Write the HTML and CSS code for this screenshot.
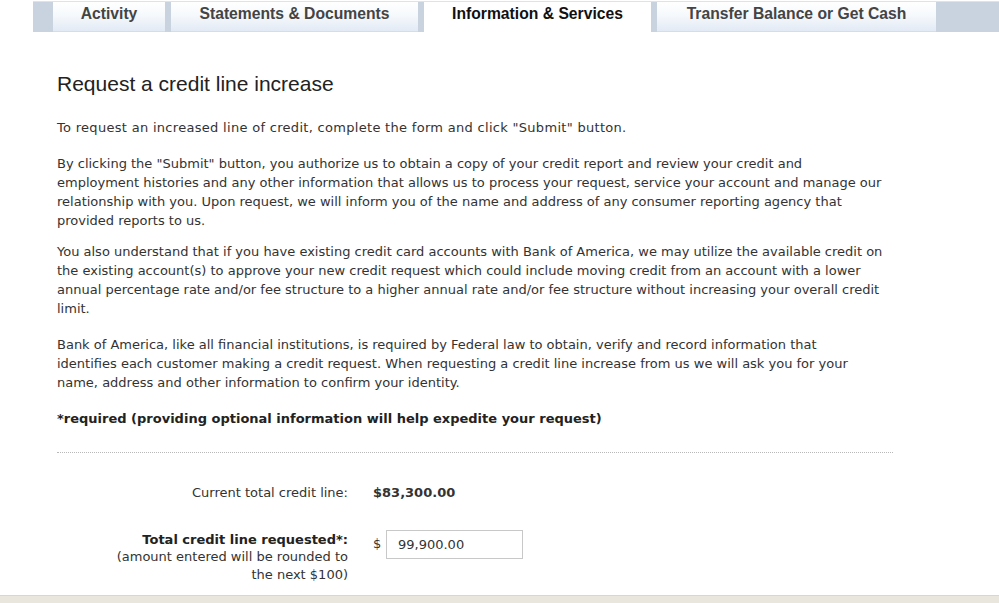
FILE: index.html
```html
<!DOCTYPE html>
<html>
<head>
<meta charset="utf-8">
<link rel="stylesheet" href="styles.css">
</head>
<body>
<div class="page">
  <nav class="tabs">
    <div class="tab-edge"></div>
    <a class="tab tab-activity">Activity</a>
    <div class="sep"></div>
    <a class="tab tab-statements">Statements &amp; Documents</a>
    <div class="sep"></div>
    <a class="tab tab-info active">Information &amp; Services</a>
    <div class="sep"></div>
    <a class="tab tab-transfer">Transfer Balance or Get Cash</a>
    <div class="tab-fill"></div>
  </nav>
  <main class="content">
    <h1 class="title">Request a credit line increase</h1>
    <p class="p1">To request an increased line of credit, complete the form and click "Submit" button.</p>
    <p class="p2">By clicking the "Submit" button, you authorize us to obtain a copy of your credit report and review your credit and<br>employment histories and any other information that allows us to process your request, service your account and manage our<br>relationship with you. Upon request, we will inform you of the name and address of any consumer reporting agency that<br>provided reports to us.</p>
    <p class="p3">You also understand that if you have existing credit card accounts with Bank of America, we may utilize the available credit on<br>the existing account(s) to approve your new credit request which could include moving credit from an account with a lower<br>annual percentage rate and/or fee structure to a higher annual rate and/or fee structure without increasing your overall credit<br>limit.</p>
    <p class="p4">Bank of America, like all financial institutions, is required by Federal law to obtain, verify and record information that<br>identifies each customer making a credit request. When requesting a credit line increase from us we will ask you for your<br>name, address and other information to confirm your identity.</p>
    <p class="required">*required (providing optional information will help expedite your request)</p>
    <div class="divider"></div>
    <div class="form">
      <div class="row row-current">
        <div class="label">Current total credit line:</div>
        <div class="value"><strong>$83,300.00</strong></div>
      </div>
      <div class="row row-request">
        <div class="label"><strong>Total credit line requested*:</strong><br>(amount entered will be rounded to<br>the next $100)</div>
        <div class="value input-wrap"><span class="dollar">$</span><input class="amount" type="text" value="99,900.00"></div>
      </div>
    </div>
  </main>
  <footer class="bottom-bar"></footer>
</div>
</body>
</html>
```

FILE: styles.css
```css
html, body {
  margin: 0;
  padding: 0;
  background: #fff;
}
.page {
  width: 999px;
  height: 603px;
  overflow: hidden;
  display: flex;
  flex-direction: column;
  font-family: "DejaVu Sans", Verdana, sans-serif;
  color: #333;
}
.tabs {
  display: flex;
  height: 31px;
  margin: 1px 0 0 33px;
  border-top: 1px solid #dfe3e8;
  background: #c9d3df;
  box-sizing: border-box;
}
.tab-edge {
  width: 20px;
  background: #c9d3df;
}
.sep {
  width: 6px;
  background: #c9d3df;
}
.tab-fill {
  flex: 1;
  background: #c9d3df;
}
.tab {
  display: flex;
  align-items: flex-start;
  justify-content: center;
  padding-top: 3px;
  box-sizing: border-box;
  font-family: "Liberation Sans", Arial, sans-serif;
  font-weight: bold;
  font-size: 15.7px;
  color: #444;
  background: linear-gradient(#ffffff 0%, #f6f9fc 45%, #e2eaf5 100%);
  border-bottom: 1px solid #d5dde8;
}
.tab.active {
  background: #fff;
  color: #111;
  border-bottom-color: #fff;
}
.tab-activity { width: 112px; }
.tab-statements { width: 247px; }
.tab-info { width: 227px; }
.tab-transfer { width: 279px; }
.content {
  flex: 1;
  padding: 0 0 0 57px;
}
.title {
  font-family: "Liberation Sans", Arial, sans-serif;
  font-weight: normal;
  font-size: 21px;
  color: #222;
  margin: 40px 0 0 0;
  line-height: 24px;
}
.content p {
  font-size: 13px;
  line-height: 19px;
  margin: 0;
  white-space: nowrap;
}
.p1 { margin-top: 22px !important; letter-spacing: 0.3px; }
.p2 { margin-top: 17px !important; }
.p3 { margin-top: 12px !important; }
.p4 { margin-top: 17px !important; }
.required {
  font-weight: bold;
  margin-top: 17px !important;
  color: #222;
}
.divider {
  width: 836px;
  margin-top: 24px;
  border-top: 1px dotted #b8b8b8;
}
.form {
  margin-top: 31px;
  font-size: 13px;
  line-height: 17.5px;
}
.row {
  display: flex;
  align-items: flex-start;
}
.label {
  width: 291px;
  text-align: right;
}
.value {
  margin-left: 25px;
}
.row-request {
  margin-top: 29px;
}
.label strong {
  color: #222;
}
.input-wrap {
  display: flex;
  align-items: center;
  margin-top: -1px;
}
.dollar {
  width: 13px;
}
.amount {
  width: 137px;
  height: 29px;
  box-sizing: border-box;
  border: 1px solid #c8c8c8;
  padding: 0 0 0 11px;
  font-family: "DejaVu Sans", Verdana, sans-serif;
  font-size: 13px;
  color: #333;
  outline: none;
}
.bottom-bar {
  height: 7px;
  background: #e8e6dd;
  border-top: 1px solid #d9d6ca;
  flex: none;
}
```
